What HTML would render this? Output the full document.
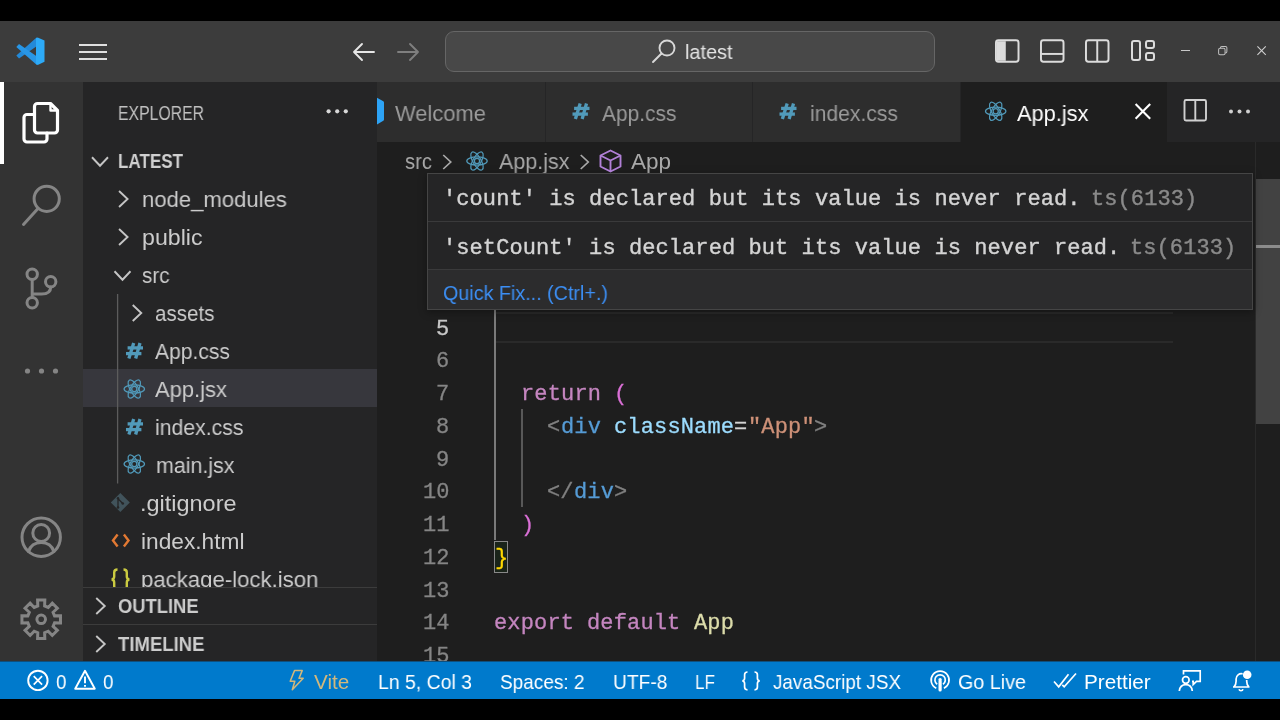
<!DOCTYPE html>
<html>
<head>
<meta charset="utf-8">
<title>VS Code</title>
<style>
*{box-sizing:border-box;margin:0;padding:0}
html,body{width:1280px;height:720px;overflow:hidden;background:#000}
body{position:relative;font-family:"Liberation Sans",sans-serif;color:#ccc}
.a{position:absolute}
.t{position:absolute;white-space:pre;line-height:1;will-change:transform}
.m{font-family:"Liberation Mono",monospace;-webkit-text-stroke:0.4px}
svg{position:absolute;overflow:visible}
#title{left:0;top:21px;width:1280px;height:61px;background:#3c3c3c}
#act{left:0;top:82px;width:83px;height:579px;background:#333333}
#side{left:83px;top:82px;width:294px;height:579px;background:#252526;overflow:hidden}
#tabs{left:377px;top:82px;width:903px;height:60px;background:#252526}
#ed{left:377px;top:142px;width:903px;height:519px;background:#1e1e1e;overflow:hidden}
#status{left:0;top:661px;width:1280px;height:38px;background:#007acc;color:#fff}
.tab{position:absolute;top:0;height:60px;background:#2d2d2d}
</style>
</head>
<body>

<!-- TITLE BAR -->
<div id="title" class="a">
  <!-- vscode logo -->
  <svg style="left:0;top:0" width="60" height="61" viewBox="0 21 60 61">
    <path d="M16.300 55.400L19 58.400L37 45.900V37.300L36 38Z" fill="#2389d8"/>
    <path d="M16.300 46.900L19 43.900L37 56.400V65L36 64.300Z" fill="#2896e6"/>
    <path d="M36 38.200L37.700 37.400L44.500 40.500V61.800L37.700 64.900L36 64.100Z" fill="#2daaf7"/>
  </svg>
  <!-- hamburger -->
  <div class="a" style="left:79px;top:23px;width:28px;height:2px;background:#e0e0e0"></div>
  <div class="a" style="left:79px;top:30px;width:28px;height:2px;background:#e0e0e0"></div>
  <div class="a" style="left:79px;top:37px;width:28px;height:2px;background:#e0e0e0"></div>
  <!-- back / forward -->
  <svg style="left:352px;top:21px" width="23" height="20" viewBox="0 0 23 20" fill="none" stroke="#e6e6e6" stroke-width="1.9" stroke-linecap="round" stroke-linejoin="round"><path d="M22 10H2M10 2L2 10l8 8"/></svg>
  <svg style="left:397px;top:21px" width="23" height="20" viewBox="0 0 23 20" fill="none" stroke="#7f7f7f" stroke-width="1.9" stroke-linecap="round" stroke-linejoin="round"><path d="M1 10H21M13 2l8 8-8 8"/></svg>
  <!-- command center -->
  <div class="a" style="left:445px;top:10px;width:490px;height:41px;border:1px solid #666666;border-radius:9px;background:#484848"></div>
  <svg style="left:651px;top:17px" width="26" height="26" viewBox="0 0 26 26" fill="none" stroke="#d8d8d8" stroke-width="1.9" stroke-linecap="round"><circle cx="16" cy="10" r="7.5"/><path d="M10.5 15.5L2 24"/></svg>
  <div class="t" style="left:684.7px;top:21.1px;font-size:20.5px;color:#e4e4e4;transform:scaleX(0.97);transform-origin:0 0">latest</div>
  <!-- layout icons -->
  <svg style="left:995px;top:18px" width="24.500" height="24" viewBox="0 0 25 24" fill="none" stroke="#dcdcdc" stroke-width="2"><rect x="1" y="1" width="23" height="22" rx="2.5"/><path d="M2 2h9v20H2z" fill="#dcdcdc" stroke="none"/></svg>
  <svg style="left:1040px;top:18px" width="24.500" height="24" viewBox="0 0 25 24" fill="none" stroke="#dcdcdc" stroke-width="2"><rect x="1" y="1" width="23" height="22" rx="2.5"/><path d="M1 15h23"/></svg>
  <svg style="left:1085px;top:18px" width="24.500" height="24" viewBox="0 0 25 24" fill="none" stroke="#dcdcdc" stroke-width="2"><rect x="1" y="1" width="23" height="22" rx="2.5"/><path d="M12.5 1v22"/></svg>
  <svg style="left:1131px;top:19px" width="24" height="22" viewBox="0 0 24 22" fill="none" stroke="#dcdcdc" stroke-width="2"><rect x="1" y="1" width="8" height="19" rx="2"/><rect x="15" y="1" width="8" height="7" rx="2"/><rect x="15" y="13" width="8" height="7" rx="2"/></svg>
  <!-- window controls -->
  <div class="a" style="left:1181px;top:29px;width:9px;height:1px;background:#c8c8c8"></div>
  <svg style="left:1218px;top:25px" width="9.500" height="9.200" viewBox="0 0 10 10" fill="none" stroke="#c0c0c0" stroke-width="1.100"><rect x="0.5" y="2.5" width="7" height="7" rx="1.5"/><path d="M2.5 2.5V2a1.5 1.5 0 0 1 1.500-1.500h4a1.500 1.500 0 0 1 1.500 1.500v4a1.500 1.500 0 0 1-1.500 1.500H7.500"/></svg>
  <svg style="left:1257px;top:25px" width="9.200" height="9.200" viewBox="0 0 11 11" fill="none" stroke="#d0d0d0" stroke-width="1.300"><path d="M0.500.5l10 10M10.500.5l-10 10"/></svg>
</div>

<!-- ACTIVITY BAR -->
<div id="act" class="a">
  <div class="a" style="left:0;top:0;width:4px;height:82px;background:#fff"></div>
  <!-- explorer -->
  <svg style="left:0;top:0" width="83" height="579" viewBox="0 82 83 579" fill="none" stroke-linejoin="round" stroke-linecap="round">
    <g stroke="#ffffff" stroke-width="3.2">
      <path d="M34.500 114.500H27a3 3 0 0 0-3 3V139a3 3 0 0 0 3 3H44a3 3 0 0 0 3-3V133"/>
      <path d="M37.500 103.500H50.500L57.500 110.500V130a3 3 0 0 1-3 3H37.500a3 3 0 0 1-3-3V106.500a3 3 0 0 1 3-3Z"/>
      <path d="M50.500 104V110.500H57" stroke-width="2.400"/>
    </g>
    <g stroke="#858585" stroke-width="3">
      <circle cx="46.700" cy="198.800" r="12.600"/>
      <path d="M38 208.500L23.500 224.500"/>
      <circle cx="32.200" cy="274.300" r="5.200"/>
      <circle cx="32.200" cy="302.800" r="5.200"/>
      <circle cx="50.700" cy="281.700" r="5.200"/>
      <path d="M32.200 279.500V297.600M50.700 287c0 5-4 7-9 7H32.200"/>
    </g>
    <g fill="#858585" stroke="none">
      <circle cx="27.500" cy="371" r="2.600"/><circle cx="41.500" cy="371" r="2.600"/><circle cx="55.500" cy="371" r="2.600"/>
    </g>
    <g stroke="#858585" stroke-width="3">
      <circle cx="41.200" cy="537.200" r="19.200"/>
      <circle cx="41.200" cy="533" r="8.400"/>
      <path d="M28.500 551.500c2-6 7-9 12.700-9s10.700 3 12.700 9"/>
    </g>
    <g stroke="#858585" stroke-width="3" transform="translate(0.200 81.800)" stroke-linejoin="miter">
      <path d="M37.57 524.13 L37.40 518.23 L44.60 518.23 L44.43 524.13 L48.02 525.62 L52.08 521.33 L57.17 526.42 L52.88 530.48 L54.37 534.07 L60.27 533.90 L60.27 541.10 L54.37 540.93 L52.88 544.52 L57.17 548.58 L52.08 553.67 L48.02 549.38 L44.43 550.87 L44.60 556.77 L37.40 556.77 L37.57 550.87 L33.98 549.38 L29.92 553.67 L24.83 548.58 L29.12 544.52 L27.63 540.93 L21.73 541.10 L21.73 533.90 L27.63 534.07 L29.12 530.48 L24.83 526.42 L29.92 521.33 L33.98 525.62Z"/>
      <circle cx="41" cy="537.500" r="4.300"/>
    </g>
  </svg>
</div>

<!-- SIDEBAR -->
<div id="side" class="a">
<div class="a" style="left:0;top:287px;width:294px;height:38px;background:#37373d"></div>
<div class="t" style="left:34.7px;top:20.97px;font-size:20px;color:#c0c0c0;transform:scale(0.7894,1.0000);transform-origin:0 16.93px;">EXPLORER</div>
<div class="t" style="left:34.599999999999994px;top:69.37px;font-size:20px;color:#d0d0d0;font-weight:700;transform:scale(0.8519,1.0000);transform-origin:0 16.93px;">LATEST</div>
<div class="t" style="left:59px;top:107.15px;font-size:22.5px;color:#cccccc;transform:scale(0.9822,1.0000);transform-origin:0 19.05px;">node_modules</div>
<div class="t" style="left:59px;top:145.15px;font-size:22.5px;color:#cccccc;transform:scale(1.0290,1.0000);transform-origin:0 19.05px;">public</div>
<div class="t" style="left:59px;top:183.15px;font-size:22.5px;color:#cccccc;transform:scale(0.9167,1.0000);transform-origin:0 19.05px;">src</div>
<div class="t" style="left:72px;top:221.15px;font-size:22.5px;color:#cccccc;transform:scale(0.9149,1.0000);transform-origin:0 19.05px;">assets</div>
<div class="t" style="left:72px;top:259.15px;font-size:22.5px;color:#cccccc;transform:scale(0.9370,1.0000);transform-origin:0 19.05px;">App.css</div>
<div class="t" style="left:72px;top:297.15px;font-size:22.5px;color:#cccccc;transform:scale(0.9757,1.0000);transform-origin:0 19.05px;">App.jsx</div>
<div class="t" style="left:72px;top:335.15px;font-size:22.5px;color:#cccccc;transform:scale(0.9435,1.0000);transform-origin:0 19.05px;">index.css</div>
<div class="t" style="left:73px;top:373.15px;font-size:22.5px;color:#cccccc;transform:scale(0.9512,1.0000);transform-origin:0 19.05px;">main.jsx</div>
<div class="t" style="left:57.30000000000001px;top:411.15px;font-size:22.5px;color:#cccccc;transform:scale(1.0425,1.0000);transform-origin:0 19.05px;">.gitignore</div>
<div class="t" style="left:57.900000000000006px;top:449.15px;font-size:22.5px;color:#cccccc;transform:scale(1.0093,1.0000);transform-origin:0 19.05px;">index.html</div>
<div class="t" style="left:57.900000000000006px;top:487.15px;font-size:22.5px;color:#cccccc;transform:scale(0.9855,1.0000);transform-origin:0 19.05px;">package-lock.json</div>
<svg style="left:0;top:0" width="294" height="579" viewBox="83 82 294 579"><g fill="#d8d8d8"><circle cx="328.600" cy="111.300" r="2.100"/><circle cx="337.200" cy="111.300" r="2.100"/><circle cx="345.800" cy="111.300" r="2.100"/></g><path d="M92.00 157.25L100.00 165.75L108.00 157.25" fill="none" stroke="#c5c5c5" stroke-width="1.9" stroke-linejoin="miter"/><path d="M119.05 191.00L127.55 199.00L119.05 207.00" fill="none" stroke="#c5c5c5" stroke-width="1.9" stroke-linejoin="miter"/><path d="M119.05 229.00L127.55 237.00L119.05 245.00" fill="none" stroke="#c5c5c5" stroke-width="1.9" stroke-linejoin="miter"/><path d="M114.50 271.25L122.50 279.75L130.50 271.25" fill="none" stroke="#c5c5c5" stroke-width="1.9" stroke-linejoin="miter"/><path d="M132.75 305.00L141.25 313.00L132.75 321.00" fill="none" stroke="#c5c5c5" stroke-width="1.9" stroke-linejoin="miter"/><path d="M117.600 294V483.500" stroke="#5c5c5c" stroke-width="1.300"/><g fill="none" stroke="#519aba" stroke-width="3.3"><path d="M133.70 343.00L128.90 358.50"/><path d="M140.00 343.00L135.65 358.50"/><path d="M127.60 347.90H143.00"/><path d="M126.00 353.60H141.40"/></g><g fill="none" stroke="#519aba" stroke-width="1.25"><ellipse cx="134.3" cy="389" rx="10.2" ry="4.08" transform="rotate(0 134.3 389)"/><ellipse cx="134.3" cy="389" rx="10.2" ry="4.08" transform="rotate(60 134.3 389)"/><ellipse cx="134.3" cy="389" rx="10.2" ry="4.08" transform="rotate(120 134.3 389)"/><circle cx="134.3" cy="389" r="2.6" stroke-width="1.25"/></g><g fill="none" stroke="#519aba" stroke-width="3.3"><path d="M133.70 419.00L128.90 434.50"/><path d="M140.00 419.00L135.65 434.50"/><path d="M127.60 423.90H143.00"/><path d="M126.00 429.60H141.40"/></g><g fill="none" stroke="#519aba" stroke-width="1.25"><ellipse cx="134.3" cy="464" rx="10.2" ry="4.08" transform="rotate(0 134.3 464)"/><ellipse cx="134.3" cy="464" rx="10.2" ry="4.08" transform="rotate(60 134.3 464)"/><ellipse cx="134.3" cy="464" rx="10.2" ry="4.08" transform="rotate(120 134.3 464)"/><circle cx="134.3" cy="464" r="2.6" stroke-width="1.25"/></g><g><path d="M120.300 493L129.800 502.500L120.300 512L110.800 502.500Z" fill="#41535b"/><path d="M117.800 498.500L122.500 503.200M118 498.500V507.500" stroke="#252526" stroke-width="1.300" fill="none"/><circle cx="118" cy="507.500" r="1.300" fill="#252526"/><circle cx="122.800" cy="503.500" r="1.300" fill="#252526"/><circle cx="118" cy="498.300" r="1.200" fill="#252526"/></g><path d="M117.600 534.500L113 540.500L117.600 546.500M123.900 534.500L128.500 540.500L123.900 546.500" fill="none" stroke="#e37933" stroke-width="2.400"/><g fill="none" stroke="#cbcb41" stroke-width="2.400"><path d="M117.500 569.500c-2.600 0-3.300 1-3.300 3v4c0 1.800-.8 2.700-2.500 3 1.700.3 2.500 1.200 2.500 3v4c0 2 .7 3 3.300 3"/><path d="M123.500 569.500c2.600 0 3.300 1 3.300 3v4c0 1.800.8 2.700 2.500 3-1.700.3-2.500 1.200-2.500 3v4c0 2-.7 3-3.300 3"/></g></svg>
<div class="a" style="left:0;top:505px;width:294px;height:74px;background:#252526;border-top:1px solid #3c3c3c"></div>
<div class="a" style="left:0;top:542px;width:294px;height:1px;background:#3c3c3c"></div>
<div class="t" style="left:35px;top:514.37px;font-size:20px;color:#cccccc;font-weight:700;transform:scale(0.9171,1.0000);transform-origin:0 16.93px;">OUTLINE</div>
<div class="t" style="left:35px;top:552.47px;font-size:20px;color:#cccccc;font-weight:700;transform:scale(0.9267,1.0000);transform-origin:0 16.93px;">TIMELINE</div>
<svg style="left:0;top:0" width="294" height="579" viewBox="83 82 294 579"><path d="M96.25 598.00L104.75 606.00L96.25 614.00" fill="none" stroke="#c5c5c5" stroke-width="1.9" stroke-linejoin="miter"/><path d="M96.25 636.00L104.75 644.00L96.25 652.00" fill="none" stroke="#c5c5c5" stroke-width="1.9" stroke-linejoin="miter"/></svg>
</div>

<!-- TABS -->
<div id="tabs" class="a">
<div class="tab" style="left:0;width:168px"></div>
<div class="tab" style="left:169px;width:206px"></div>
<div class="tab" style="left:376px;width:207px"></div>
<div class="tab" style="left:584px;width:206px;background:#1e1e1e"></div>
<div class="t" style="left:18px;top:20.55px;font-size:22.5px;color:#9a9a9a;transform:scale(0.9746,1.0000);transform-origin:0 19.05px;">Welcome</div>
<div class="t" style="left:225px;top:20.55px;font-size:22.5px;color:#9a9a9a;transform:scale(0.9307,1.0000);transform-origin:0 19.05px;">App.css</div>
<div class="t" style="left:432.5px;top:20.55px;font-size:22.5px;color:#9a9a9a;transform:scale(0.9382,1.0000);transform-origin:0 19.05px;">index.css</div>
<div class="t" style="left:640px;top:20.55px;font-size:22.5px;color:#ffffff;transform:scale(0.9689,1.0000);transform-origin:0 19.05px;">App.jsx</div>
<svg style="left:0;top:0" width="903" height="60" viewBox="377 82 903 60"><path d="M377 97.800L383.300 101.200Q384 101.600 384 102.500V119.500Q384 120.400 383.300 120.800L377 124.400Z" fill="#2da3f5"/><g fill="none" stroke="#519aba" stroke-width="3.3"><path d="M580.20 103.50L575.40 119.00"/><path d="M586.50 103.50L582.15 119.00"/><path d="M574.10 108.40H589.50"/><path d="M572.50 114.10H587.90"/></g><g fill="none" stroke="#519aba" stroke-width="3.3"><path d="M787.20 103.50L782.40 119.00"/><path d="M793.50 103.50L789.15 119.00"/><path d="M781.10 108.40H796.50"/><path d="M779.50 114.10H794.90"/></g><g fill="none" stroke="#519aba" stroke-width="1.25"><ellipse cx="995.7" cy="111.3" rx="10.2" ry="4.08" transform="rotate(0 995.7 111.3)"/><ellipse cx="995.7" cy="111.3" rx="10.2" ry="4.08" transform="rotate(60 995.7 111.3)"/><ellipse cx="995.7" cy="111.3" rx="10.2" ry="4.08" transform="rotate(120 995.7 111.3)"/><circle cx="995.7" cy="111.3" r="2.6" stroke-width="1.25"/></g><path d="M1135.600 104.100L1150.200 118.700M1150.200 104.100L1135.600 118.700" stroke="#ffffff" stroke-width="2.100" fill="none"/><g fill="none" stroke="#d0d0d0" stroke-width="1.900"><rect x="1184.500" y="100" width="21.500" height="20.500" rx="1.500"/><path d="M1195.300 100V120.500"/></g><g fill="#d0d0d0"><circle cx="1231" cy="111.500" r="2"/><circle cx="1239.500" cy="111.500" r="2"/><circle cx="1248" cy="111.500" r="2"/></g></svg>
</div>

<!-- EDITOR -->
<div id="ed" class="a">
<div class="t" style="left:27.5px;top:9.15px;font-size:22.5px;color:#a9a9a9;transform:scale(0.9000,1.0000);transform-origin:0 19.05px;">src</div>
<div class="t" style="left:121.5px;top:9.15px;font-size:22.5px;color:#a9a9a9;transform:scale(0.9553,1.0000);transform-origin:0 19.05px;">App.jsx</div>
<div class="t" style="left:253.5px;top:9.15px;font-size:22.5px;color:#a9a9a9;">App</div>
<div class="a" style="left:119px;top:170px;width:677px;height:31px;border-top:2px solid #2a2a2a;border-bottom:2px solid #2a2a2a"></div>
<div class="a" style="left:117.4px;top:167px;width:1.8px;height:231px;background:#7a7a7a"></div>
<div class="a" style="left:144.1px;top:267px;width:1.6px;height:98px;background:#585858"></div>
<div class="t m" style="left:59.14999999999998px;top:176.73px;font-size:22px;color:#c6c6c6;transform:scale(1.0000,1.0400);transform-origin:0 16.87px;letter-spacing:0.15px;-webkit-text-stroke:0.3px;">5</div>
<div class="t m" style="left:59.14999999999998px;top:209.46px;font-size:22px;color:#858585;transform:scale(1.0000,1.0400);transform-origin:0 16.87px;letter-spacing:0.15px;-webkit-text-stroke:0.3px;">6</div>
<div class="t m" style="left:59.14999999999998px;top:242.19px;font-size:22px;color:#858585;transform:scale(1.0000,1.0400);transform-origin:0 16.87px;letter-spacing:0.15px;-webkit-text-stroke:0.3px;">7</div>
<div class="t m" style="left:59.14999999999998px;top:274.92px;font-size:22px;color:#858585;transform:scale(1.0000,1.0400);transform-origin:0 16.87px;letter-spacing:0.15px;-webkit-text-stroke:0.3px;">8</div>
<div class="t m" style="left:59.14999999999998px;top:307.65px;font-size:22px;color:#858585;transform:scale(1.0000,1.0400);transform-origin:0 16.87px;letter-spacing:0.15px;-webkit-text-stroke:0.3px;">9</div>
<div class="t m" style="left:45.80000000000001px;top:340.38px;font-size:22px;color:#858585;transform:scale(1.0000,1.0400);transform-origin:0 16.87px;letter-spacing:0.15px;-webkit-text-stroke:0.3px;">10</div>
<div class="t m" style="left:45.80000000000001px;top:373.11px;font-size:22px;color:#858585;transform:scale(1.0000,1.0400);transform-origin:0 16.87px;letter-spacing:0.15px;-webkit-text-stroke:0.3px;">11</div>
<div class="t m" style="left:45.80000000000001px;top:405.84px;font-size:22px;color:#858585;transform:scale(1.0000,1.0400);transform-origin:0 16.87px;letter-spacing:0.15px;-webkit-text-stroke:0.3px;">12</div>
<div class="t m" style="left:45.80000000000001px;top:438.57px;font-size:22px;color:#858585;transform:scale(1.0000,1.0400);transform-origin:0 16.87px;letter-spacing:0.15px;-webkit-text-stroke:0.3px;">13</div>
<div class="t m" style="left:45.80000000000001px;top:471.30px;font-size:22px;color:#858585;transform:scale(1.0000,1.0400);transform-origin:0 16.87px;letter-spacing:0.15px;-webkit-text-stroke:0.3px;">14</div>
<div class="t m" style="left:45.80000000000001px;top:504.03px;font-size:22px;color:#858585;transform:scale(1.0000,1.0400);transform-origin:0 16.87px;letter-spacing:0.15px;-webkit-text-stroke:0.3px;">15</div>
<div class="t m" style="left:143.70000000000005px;top:242.19px;font-size:22px;color:#c586c0;transform:scale(1.0000,1.0400);transform-origin:0 16.87px;letter-spacing:0.15px;-webkit-text-stroke:0.3px;">return</div>
<div class="t m" style="left:223.79999999999995px;top:242.19px;font-size:22px;color:#d4d4d4;transform:scale(1.0000,1.0400);transform-origin:0 16.87px;letter-spacing:0.15px;-webkit-text-stroke:0.3px;"> </div>
<div class="t m" style="left:237.14999999999998px;top:242.19px;font-size:22px;color:#da70d6;transform:scale(1.0000,1.0400);transform-origin:0 16.87px;letter-spacing:0.15px;-webkit-text-stroke:0.3px;">(</div>
<div class="t m" style="left:170.39999999999998px;top:274.92px;font-size:22px;color:#808080;transform:scale(1.0000,1.0400);transform-origin:0 16.87px;letter-spacing:0.15px;-webkit-text-stroke:0.3px;">&lt;</div>
<div class="t m" style="left:183.75px;top:274.92px;font-size:22px;color:#569cd6;transform:scale(1.0000,1.0400);transform-origin:0 16.87px;letter-spacing:0.15px;-webkit-text-stroke:0.3px;">div</div>
<div class="t m" style="left:223.79999999999995px;top:274.92px;font-size:22px;color:#d4d4d4;transform:scale(1.0000,1.0400);transform-origin:0 16.87px;letter-spacing:0.15px;-webkit-text-stroke:0.3px;"> </div>
<div class="t m" style="left:237.14999999999998px;top:274.92px;font-size:22px;color:#9cdcfe;transform:scale(1.0000,1.0400);transform-origin:0 16.87px;letter-spacing:0.15px;-webkit-text-stroke:0.3px;">className</div>
<div class="t m" style="left:357.29999999999995px;top:274.92px;font-size:22px;color:#d4d4d4;transform:scale(1.0000,1.0400);transform-origin:0 16.87px;letter-spacing:0.15px;-webkit-text-stroke:0.3px;">=</div>
<div class="t m" style="left:370.65px;top:274.92px;font-size:22px;color:#ce9178;transform:scale(1.0000,1.0400);transform-origin:0 16.87px;letter-spacing:0.15px;-webkit-text-stroke:0.3px;">"App"</div>
<div class="t m" style="left:437.4px;top:274.92px;font-size:22px;color:#808080;transform:scale(1.0000,1.0400);transform-origin:0 16.87px;letter-spacing:0.15px;-webkit-text-stroke:0.3px;">&gt;</div>
<div class="t m" style="left:170.39999999999998px;top:340.38px;font-size:22px;color:#808080;transform:scale(1.0000,1.0400);transform-origin:0 16.87px;letter-spacing:0.15px;-webkit-text-stroke:0.3px;">&lt;/</div>
<div class="t m" style="left:197.10000000000002px;top:340.38px;font-size:22px;color:#569cd6;transform:scale(1.0000,1.0400);transform-origin:0 16.87px;letter-spacing:0.15px;-webkit-text-stroke:0.3px;">div</div>
<div class="t m" style="left:237.14999999999998px;top:340.38px;font-size:22px;color:#808080;transform:scale(1.0000,1.0400);transform-origin:0 16.87px;letter-spacing:0.15px;-webkit-text-stroke:0.3px;">&gt;</div>
<div class="t m" style="left:143.70000000000005px;top:373.11px;font-size:22px;color:#da70d6;transform:scale(1.0000,1.0400);transform-origin:0 16.87px;letter-spacing:0.15px;-webkit-text-stroke:0.3px;">)</div>
<div class="a" style="left:117px;top:399px;width:14px;height:32px;border:1px solid #888888;background:rgba(0,100,0,0.1)"></div>
<div class="t m" style="left:117.93px;top:405.84px;font-size:22px;color:#ffd700;transform:scale(1.0000,1.0400);transform-origin:0 16.87px;letter-spacing:0.15px;-webkit-text-stroke:0.3px;">}</div>
<div class="t m" style="left:117.0px;top:471.30px;font-size:22px;color:#c586c0;transform:scale(1.0000,1.0400);transform-origin:0 16.87px;letter-spacing:0.15px;-webkit-text-stroke:0.3px;">export</div>
<div class="t m" style="left:197.10000000000002px;top:471.30px;font-size:22px;color:#d4d4d4;transform:scale(1.0000,1.0400);transform-origin:0 16.87px;letter-spacing:0.15px;-webkit-text-stroke:0.3px;"> </div>
<div class="t m" style="left:210.45000000000005px;top:471.30px;font-size:22px;color:#c586c0;transform:scale(1.0000,1.0400);transform-origin:0 16.87px;letter-spacing:0.15px;-webkit-text-stroke:0.3px;">default</div>
<div class="t m" style="left:303.9px;top:471.30px;font-size:22px;color:#d4d4d4;transform:scale(1.0000,1.0400);transform-origin:0 16.87px;letter-spacing:0.15px;-webkit-text-stroke:0.3px;"> </div>
<div class="t m" style="left:317.25px;top:471.30px;font-size:22px;color:#dcdcaa;transform:scale(1.0000,1.0400);transform-origin:0 16.87px;letter-spacing:0.15px;-webkit-text-stroke:0.3px;">App</div>
<div class="a" style="left:878px;top:0;width:1px;height:519px;background:#2a2a2a"></div>
<div class="a" style="left:879px;top:37px;width:25px;height:245px;background:#424242"></div>
<div class="a" style="left:879px;top:103px;width:24px;height:3px;background:#8c8c8c"></div>
<div class="a" style="left:50px;top:31px;width:826px;height:137px;background:#252526;border:1px solid #454545;box-shadow:0 2px 8px rgba(0,0,0,0.36)"></div>
<div class="a" style="left:51px;top:79px;width:824px;height:1px;background:#3a3a3b"></div>
<div class="a" style="left:51px;top:127px;width:824px;height:40px;background:#2c2c2d;border-top:1px solid #3a3a3b"></div>
<div class="t m" style="left:66.30000000000001px;top:47.43px;font-size:22px;color:#d4d4d4;transform:scale(1.0000,1.0400);transform-origin:0 16.87px;letter-spacing:0.08px;">'count' is declared but its value is never read.</div>
<div class="t m" style="left:713.5px;top:47.43px;font-size:22px;color:#8a8a8a;transform:scale(1.0000,1.0400);transform-origin:0 16.87px;letter-spacing:0.08px;">ts(6133)</div>
<div class="t m" style="left:66.30000000000001px;top:95.83px;font-size:22px;color:#d4d4d4;transform:scale(1.0000,1.0400);transform-origin:0 16.87px;letter-spacing:0.08px;">'setCount' is declared but its value is never read.</div>
<div class="t m" style="left:753.4000000000001px;top:95.83px;font-size:22px;color:#8a8a8a;transform:scale(1.0000,1.0400);transform-origin:0 16.87px;letter-spacing:0.08px;">ts(6133)</div>
<div class="t" style="left:66px;top:139.72px;font-size:21px;color:#3c8ff5;transform:scale(0.9397,1.0000);transform-origin:0 17.78px;">Quick Fix... (Ctrl+.)</div>
<svg style="left:0;top:0" width="903" height="519" viewBox="377 142 903 519"><path d="M443.25 155.00L450.75 162.00L443.25 169.00" fill="none" stroke="#a9a9a9" stroke-width="1.7" stroke-linejoin="miter"/><path d="M580.75 155.00L588.25 162.00L580.75 169.00" fill="none" stroke="#a9a9a9" stroke-width="1.7" stroke-linejoin="miter"/><g fill="none" stroke="#519aba" stroke-width="1.25"><ellipse cx="477" cy="161" rx="10.2" ry="4.08" transform="rotate(0 477 161)"/><ellipse cx="477" cy="161" rx="10.2" ry="4.08" transform="rotate(60 477 161)"/><ellipse cx="477" cy="161" rx="10.2" ry="4.08" transform="rotate(120 477 161)"/><circle cx="477" cy="161" r="2.6" stroke-width="1.25"/></g><g fill="none" stroke="#b180d7" stroke-width="1.900" stroke-linejoin="round"><path d="M610.500 150.500L620.500 155.500V166.500L610.500 171.500L600.500 166.500V155.500Z"/><path d="M600.500 155.500L610.500 160.500L620.500 155.500M610.500 160.500V171.500"/></g></svg>
</div>

<!-- STATUS BAR -->
<div id="status" class="a">
<div class="a" style="left:0;top:0;width:1280px;height:1px;background:#0f4f7d"></div>
<div class="t" style="left:56px;top:11.18px;font-size:20.7px;color:#ffffff;transform:scale(0.9118,1.0000);transform-origin:0 17.52px;">0</div>
<div class="t" style="left:103px;top:11.18px;font-size:20.7px;color:#ffffff;transform:scale(0.9118,1.0000);transform-origin:0 17.52px;">0</div>
<div class="t" style="left:314px;top:11.18px;font-size:20.7px;color:#d2b87c;transform:scale(0.9920,1.0000);transform-origin:0 17.52px;">Vite</div>
<div class="t" style="left:378px;top:11.18px;font-size:20.7px;color:#ffffff;transform:scale(0.9394,1.0000);transform-origin:0 17.52px;">Ln 5, Col 3</div>
<div class="t" style="left:500px;top:11.18px;font-size:20.7px;color:#ffffff;transform:scale(0.9183,1.0000);transform-origin:0 17.52px;">Spaces: 2</div>
<div class="t" style="left:613px;top:11.18px;font-size:20.7px;color:#ffffff;transform:scale(0.9299,1.0000);transform-origin:0 17.52px;">UTF-8</div>
<div class="t" style="left:695px;top:11.18px;font-size:20.7px;color:#ffffff;transform:scale(0.8279,1.0000);transform-origin:0 17.52px;">LF</div>
<div class="t" style="left:772.5px;top:11.18px;font-size:20.7px;color:#ffffff;transform:scale(0.9125,1.0000);transform-origin:0 17.52px;">JavaScript JSX</div>
<div class="t" style="left:957.5px;top:11.18px;font-size:20.7px;color:#ffffff;transform:scale(0.9538,1.0000);transform-origin:0 17.52px;">Go Live</div>
<div class="t" style="left:1083.5px;top:11.18px;font-size:20.7px;color:#ffffff;">Prettier</div>
<svg style="left:0;top:0" width="1280" height="38" viewBox="0 661 1280 38" fill="none" stroke="#ffffff" stroke-width="1.700"><circle cx="37.900" cy="680.400" r="9.700" stroke-width="1.900"/><path d="M33.700 676.200L42.100 684.600M42.100 676.200L33.700 684.600"/><path d="M85 670.800L94.800 688.700H75.200Z" stroke-linejoin="round" stroke-width="1.900"/><path d="M85 676.500V683.300M85 685V686.800" stroke-width="1.900"/><path d="M294.500 670.600H302.200L299 678.200H303.200L292.300 689.800L294.800 681.300H290.200Z" stroke="#d2b87c" stroke-width="1.500" stroke-linejoin="round"/><path d="M747.500 672c-2.300 0-2.900.9-2.900 2.700v3.500c0 1.600-.7 2.400-2.200 2.700 1.500.3 2.200 1.100 2.200 2.700v3.500c0 1.800.6 2.700 2.900 2.700M754.500 672c2.300 0 2.900.9 2.900 2.700v3.500c0 1.600.7 2.400 2.200 2.700-1.500.3-2.200 1.100-2.200 2.700v3.500c0 1.800-.6 2.700-2.900 2.700"/><path d="M936.300 688.200a9 9 0 1 1 7.600 0M937.200 684.300a5.200 5.200 0 1 1 5.800 0" stroke-width="1.700"/><circle cx="940.100" cy="679.800" r="1.700" fill="#fff" stroke="none"/><path d="M940.100 681.500V690" stroke-width="3.200" stroke-linecap="round"/><path d="M1054 681.500L1058.700 686.800L1068.500 674.200M1062.300 684.800L1064.200 686.800L1076 673.500" stroke-width="1.700"/><circle cx="1185.800" cy="680" r="3.300"/><path d="M1179.300 691c.5-4 3.200-6.300 6.500-6.300s6 2.300 6.500 6.300M1183.500 674.500V670.800H1200.200V681.300H1196.500L1193.200 684.500V681.300H1192"/><path d="M1233 687h16.500M1234 686.800c1.500-1.500 2.100-3 2.100-5.500v-2.300a5.300 5.300 0 0 1 6.500-5.200M1246.700 680v1.300c0 2.500.6 4 2.100 5.500M1239 689.300a2.100 2.100 0 0 0 4 0"/><circle cx="1247.200" cy="674.700" r="4.300" fill="#ffffff" stroke="none"/></svg>
</div>

</body>
</html>
